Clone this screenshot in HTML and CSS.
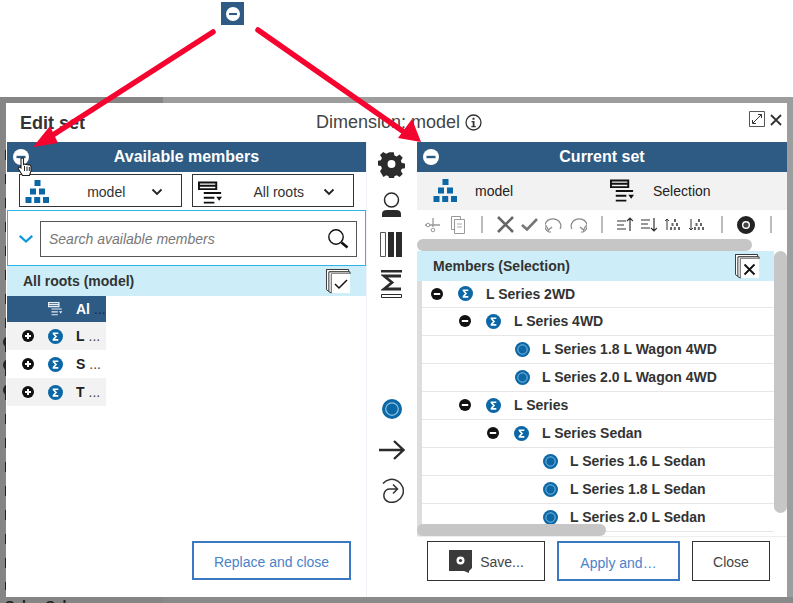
FILE: index.html
```html
<!DOCTYPE html>
<html lang="en">
<head>
    <meta charset="UTF-8">
    <title>Edit set</title>
    <link rel="stylesheet" href="styles.css">
</head>
<body>
    <svg width="0" height="0" class="defs">
        <symbol id="hier" viewBox="0 0 24 24">
            <path fill="#0b67a5" d="M9 0h6v6H9zM4.500 8.500h6v6h-6zM13.500 8.500h6v6h-6zM0 17h6v6H0zM8.700 17h6v6h-6zM17.500 17h6v6h-6z"/>
        </symbol>
        <symbol id="filter" viewBox="0 0 26 24">
            <path fill="none" stroke="#111" stroke-width="2" d="M1 1h18v7H1zM1 4.500h18"/>
            <path fill="#111" d="M6 11h18v2H6zM6 16h11v2H6zM6 21h11v2H6zM19 16h6l-3 4z"/>
        </symbol>
        <symbol id="filter-w" viewBox="0 0 26 24">
            <path fill="none" stroke="#e8eef4" stroke-width="2" d="M1 1h18v7H1zM1 4.500h18"/>
            <path fill="#e8eef4" d="M6 11h18v2H6zM6 16h11v2H6zM6 21h11v2H6zM19 16h6l-3 4z"/>
        </symbol>
        <symbol id="sigma" viewBox="0 0 16 16">
            <circle cx="8" cy="8" r="8" fill="#0b67a5"/>
            <path fill="none" stroke="#fff" stroke-width="1.800" d="M5 4.500h6M5.500 4.500 8.500 8l-3 3.500M5 11.500h6"/>
        </symbol>
        <symbol id="leaf" viewBox="0 0 16 16">
            <circle cx="8" cy="8" r="8" fill="#0b67a5"/>
            <circle cx="8" cy="8" r="5" fill="none" stroke="#8cc3e6" stroke-width="1"/>
        </symbol>
        <symbol id="minus" viewBox="0 0 12 12">
            <circle cx="6" cy="6" r="6" fill="#111"/>
            <path fill="#fff" d="M2.800 5h6.400v2H2.800z"/>
        </symbol>
        <symbol id="plus" viewBox="0 0 12 12">
            <circle cx="6" cy="6" r="6" fill="#111"/>
            <path fill="#fff" d="M3 5h6v2H3zM5 3h2v6H5z"/>
        </symbol>
        <symbol id="minus-w" viewBox="0 0 16 16">
            <circle cx="8" cy="8" r="8" fill="#fff"/>
            <path fill="#2d5b83" d="M3.500 6.800h9v2.400h-9z"/>
        </symbol>
        <symbol id="chev" viewBox="0 0 12 8">
            <path fill="none" stroke="#222" stroke-width="1.800" d="M1.500 1.500 6 6l4.500-4.500"/>
        </symbol>
        <symbol id="stack" viewBox="0 0 26 26">
            <path fill="#fff" stroke="#333" stroke-width="1" d="M.5 .5h20v3h-20z"/>
            <path fill="#fff" stroke="#333" stroke-width="1" d="M.5 .5v21l3 2V3h20V.5z"/>
            <path fill="#fff" stroke="#333" stroke-width="1" d="M3 3h22v2H5.500v20L3 23.500z"/>
            <path fill="#fff" d="M6 5h19v20H6z"/>
        </symbol>
    </svg>

    <div class="top">
        <span class="hint-icon"><svg width="14" height="14"><use href="#minus-w"/></svg></span>
    </div>

    <div class="backdrop">
        <div class="dark-side"></div>
        <div class="bottom-side"></div>
        <div class="behind-dashes"></div>
        <span class="behind-dot d1"></span>
        <span class="behind-dot d2"></span>
        <span class="behind-dot d3"></span>
        <span class="behind-text">Sales Sal</span>
        <div class="dialog">
            <div class="dialog-head">
                <span class="dialog-title">Edit set</span>
                <span class="dialog-dim">Dimension: model
                    <svg class="info" width="17" height="17" viewBox="0 0 17 17">
                        <circle cx="8.500" cy="8.500" r="7.500" fill="none" stroke="#333" stroke-width="1.300"/>
                        <path fill="#333" d="M7.500 3.800h2v2h-2zM6.500 7h3v5h1.300v1.200H6.300V12h1.400V8.200H6.500z"/>
                    </svg>
                </span>
                <svg class="expand" width="16" height="16" viewBox="0 0 16 16">
                    <path fill="#fff" stroke="#555" d="M.5 .5h15v15H.5z"/>
                    <path fill="none" stroke="#333" d="M4 12l8-8M9 3.500h3.500V7M3.500 9v3.500H7"/>
                </svg>
                <svg class="close-x" width="12" height="12" viewBox="0 0 12 12">
                    <path stroke="#333" stroke-width="1.800" d="M1 1l10 10M11 1 1 11"/>
                </svg>
            </div>

            <div class="dialog-body">
                <div class="panel left">
                    <div class="panel-head">
                        <svg class="head-icon" width="16" height="16"><use href="#minus-w"/></svg>
                        Available members
                    </div>
                    <div class="select-row">
                        <div class="select">
                            <svg class="sel-icon" width="25" height="24"><use href="#hier"/></svg>
                            <span class="sel-label">model</span>
                            <svg class="sel-chev" width="12" height="8"><use href="#chev"/></svg>
                        </div>
                        <div class="select">
                            <svg class="sel-icon filter-icon" width="25" height="24"><use href="#filter"/></svg>
                            <span class="sel-label">All roots</span>
                            <svg class="sel-chev" width="12" height="8"><use href="#chev"/></svg>
                        </div>
                    </div>
                    <div class="search-row">
                        <svg width="16" height="10" viewBox="0 0 12 8">
                            <path fill="none" stroke="#0d9ad8" stroke-width="1.800" d="M1 1.500 6 6l5-4.500"/>
                        </svg>
                        <div class="search-box">
                            <span class="placeholder">Search available members</span>
                            <svg width="22" height="22" viewBox="0 0 22 22">
                                <circle cx="9" cy="9" r="7.200" fill="none" stroke="#111" stroke-width="1.400"/>
                                <path stroke="#111" stroke-width="2.600" d="M14.500 14.500l6 5"/>
                            </svg>
                        </div>
                    </div>
                    <div class="list-head">
                        <span>All roots (model)</span>
                        <span class="stack-btn">
                            <svg width="25" height="25"><use href="#stack"/></svg>
                            <svg class="stack-mark" width="14" height="12" viewBox="0 0 14 12">
                                <path fill="none" stroke="#111" stroke-width="1.500" d="M1 6l4 4 8-8"/>
                            </svg>
                        </span>
                    </div>
                    <div class="avail">
                        <div class="avail-row selected">
                            <span class="ic-a"></span>
                            <svg class="ic-b" width="15" height="14"><use href="#filter-w"/></svg>
                            <span class="avail-text">Al</span><span class="dots">...</span>
                        </div>
                        <div class="avail-row">
                            <svg class="ic-a" width="12" height="12"><use href="#plus"/></svg>
                            <svg class="ic-b" width="15" height="15"><use href="#sigma"/></svg>
                            <span class="avail-text">L</span><span class="dots">...</span>
                        </div>
                        <div class="avail-row">
                            <svg class="ic-a" width="12" height="12"><use href="#plus"/></svg>
                            <svg class="ic-b" width="15" height="15"><use href="#sigma"/></svg>
                            <span class="avail-text">S</span><span class="dots">...</span>
                        </div>
                        <div class="avail-row">
                            <svg class="ic-a" width="12" height="12"><use href="#plus"/></svg>
                            <svg class="ic-b" width="15" height="15"><use href="#sigma"/></svg>
                            <span class="avail-text">T</span><span class="dots">...</span>
                        </div>
                    </div>
                    <div class="left-foot">
                        <button class="btn primary replace">Replace and close</button>
                    </div>
                </div>

                <div class="tools">
                    <svg width="27" height="27" viewBox="0 0 24 24">
                        <path fill="#2b2b2b" fill-rule="evenodd" d="M10 1h4l.6 3 2 .9 2.600-1.700 2.800 2.800-1.700 2.600.9 2 3 .6v4l-3 .6-.9 2 1.700 2.600-2.800 2.800-2.600-1.700-2 .9-.6 3h-4l-.6-3-2-.9-2.600 1.700L1.800 18l1.700-2.600-.9-2-3-.6V8.800l3-.6.9-2L1.800 3.600 4.600.8l2.600 1.700 2-.9zM12 8a3.500 3.500 0 1 0 0 7 3.500 3.500 0 0 0 0-7z"/>
                    </svg>
                    <svg class="t-user" width="21" height="26" viewBox="0 0 21 26">
                        <circle cx="10.500" cy="8" r="7" fill="none" stroke="#2b2b2b" stroke-width="1.500"/>
                        <path fill="#2b2b2b" d="M1 25v-3q0-4 5-4h9q5 0 5 4v3z"/>
                    </svg>
                    <svg class="t-cols" width="23" height="25" viewBox="0 0 23 25">
                        <path fill="#fff" stroke="#555" d="M.5 .5h5v24h-5z"/>
                        <path fill="#2b2b2b" d="M8 0h6v25H8zM16 0h6v25h-6z"/>
                    </svg>
                    <svg class="t-sum" width="21" height="28" viewBox="0 0 21 28">
                        <path fill="#2b2b2b" d="M0 0h21v2.500H0z"/>
                        <path fill="none" stroke="#2b2b2b" stroke-width="2.800" d="M20 6H3l8 6.500L3 19h17"/>
                        <path fill="none" stroke="#2b2b2b" d="M.5 24.500h20v3H.5z"/>
                    </svg>
                    <svg class="t-leaf" width="20" height="20"><use href="#leaf"/></svg>
                    <svg class="t-arrow" width="26" height="22" viewBox="0 0 26 22">
                        <path fill="none" stroke="#2b2b2b" stroke-width="2.400" d="M0 11h24M15 2l9.500 9L15 20"/>
                    </svg>
                    <svg class="t-loop" width="25" height="25" viewBox="0 0 25 25">
                        <path fill="none" stroke="#333" stroke-width="1.500" d="M4 5.500A11.500 11.500 0 1 1 10 24q-6-2-5-8 1-5 6-5h7M14 6.500l4.500 4.500L14 15.500"/>
                    </svg>
                </div>

                <div class="panel right">
                    <div class="panel-head">
                        <svg class="head-icon" width="16" height="16"><use href="#minus-w"/></svg>
                        Current set
                    </div>
                    <div class="info-row">
                        <svg width="25" height="24"><use href="#hier"/></svg>
                        <span class="info-model">model</span>
                        <svg class="info-filter" width="25" height="24"><use href="#filter"/></svg>
                        <span>Selection</span>
                    </div>
                    <div class="toolbar">
                        <svg width="16" height="16" viewBox="0 0 16 16">
                            <path fill="none" stroke="#999" stroke-width="1.300" d="M8 1v9M0 8h15"/>
                            <circle cx="3" cy="8" r="1.800" fill="#fff" stroke="#999"/>
                            <circle cx="8" cy="13" r="1.800" fill="#fff" stroke="#999"/>
                        </svg>
                        <svg class="tb-copy" width="14" height="18" viewBox="0 0 14 18">
                            <path fill="#fff" stroke="#999" d="M.5 .5h9v13h-9z"/>
                            <path fill="#fff" stroke="#999" d="M3.500 3.500h10v14h-10z"/>
                            <path stroke="#aaa" d="M6 8h5M6 11h5"/>
                        </svg>
                        <i class="sep s1"></i>
                        <svg width="17" height="17" viewBox="0 0 17 17">
                            <path stroke="#666" stroke-width="2.600" d="M1 1l15 15M16 1 1 16"/>
                        </svg>
                        <svg class="tb-gap" width="17" height="13" viewBox="0 0 17 13">
                            <path fill="none" stroke="#777" stroke-width="2.600" d="M1 7l5 4.500L16 1"/>
                        </svg>
                        <svg class="tb-gap" width="18" height="16" viewBox="0 0 18 16">
                            <path fill="none" stroke="#888" stroke-width="1.200" d="M6 15H4A8 7 0 1 1 15 12M1 8.500 3.500 13 7 10"/>
                        </svg>
                        <svg class="tb-gap2" width="18" height="16" viewBox="0 0 18 16">
                            <path fill="none" stroke="#888" stroke-width="1.200" d="M12 15h2A8 7 0 1 0 3 12M17 8.500 14.500 13 11 10"/>
                        </svg>
                        <i class="sep s2"></i>
                        <svg width="16" height="15" viewBox="0 0 16 15">
                            <path fill="none" stroke="#333" stroke-width="1.200" d="M0 4h9M0 8h7M0 12h9M13 14V1M10 4l3-3 3 3"/>
                        </svg>
                        <svg class="tb-gap3" width="16" height="15" viewBox="0 0 16 15">
                            <path fill="none" stroke="#333" stroke-width="1.200" d="M0 3h9M0 7h7M0 11h9M13 1v13M10 11l3 3 3-3"/>
                        </svg>
                        <svg class="tb-gap3" width="16" height="13" viewBox="0 0 16 13">
                            <path fill="none" stroke="#333" d="M2 12V1M0 3l2-2 2 2"/>
                            <path fill="#666" d="M9 1h2v3H9zM6.500 5h2v3h-2zM11 5h2v3h-2zM5 9h2v3H5zM8.800 9h2v3h-2zM13 9h2v3h-2z"/>
                        </svg>
                        <svg class="tb-gap3" width="16" height="13" viewBox="0 0 16 13">
                            <path fill="none" stroke="#333" d="M2 1v11M0 10l2 2 2-2"/>
                            <path fill="#666" d="M9 1h2v3H9zM6.500 5h2v3h-2zM11 5h2v3h-2zM5 9h2v3H5zM8.800 9h2v3h-2zM13 9h2v3h-2z"/>
                        </svg>
                        <i class="sep s3"></i>
                        <svg width="18" height="18" viewBox="0 0 18 18">
                            <circle cx="9" cy="9" r="6.500" fill="#fff" stroke="#222" stroke-width="5"/>
                            <circle cx="9" cy="9" r="2.600" fill="#444"/>
                        </svg>
                        <i class="sep s4"></i>
                    </div>
                    <div class="hscroll"><span class="thumb top-thumb"></span></div>
                    <div class="members-wrap">
                        <div class="members">
                            <div class="list-head members-head">
                                <span>Members (Selection)</span>
                                <span class="stack-btn">
                                    <svg width="25" height="25"><use href="#stack"/></svg>
                                    <svg class="stack-mark" width="13" height="13" viewBox="0 0 13 13">
                                        <path stroke="#111" stroke-width="1.800" d="M1.500 1.500l10 10M11.500 1.500l-10 10"/>
                                    </svg>
                                </span>
                            </div>
                            <div class="tree">
                                <div class="tree-row lv0">
                                    <svg class="toggle" width="12" height="12"><use href="#minus"/></svg>
                                    <svg class="node" width="15" height="15"><use href="#sigma"/></svg>
                                    <span>L Series 2WD</span>
                                </div>
                                <div class="tree-row lv1">
                                    <svg class="toggle" width="12" height="12"><use href="#minus"/></svg>
                                    <svg class="node" width="15" height="15"><use href="#sigma"/></svg>
                                    <span>L Series 4WD</span>
                                </div>
                                <div class="tree-row lv2">
                                    <svg class="node tip" width="15" height="15"><use href="#leaf"/></svg>
                                    <span>L Series 1.8 L Wagon 4WD</span>
                                </div>
                                <div class="tree-row lv2">
                                    <svg class="node tip" width="15" height="15"><use href="#leaf"/></svg>
                                    <span>L Series 2.0 L Wagon 4WD</span>
                                </div>
                                <div class="tree-row lv1">
                                    <svg class="toggle" width="12" height="12"><use href="#minus"/></svg>
                                    <svg class="node" width="15" height="15"><use href="#sigma"/></svg>
                                    <span>L Series</span>
                                </div>
                                <div class="tree-row lv2b">
                                    <svg class="toggle" width="12" height="12"><use href="#minus"/></svg>
                                    <svg class="node" width="15" height="15"><use href="#sigma"/></svg>
                                    <span>L Series Sedan</span>
                                </div>
                                <div class="tree-row lv3">
                                    <svg class="node tip" width="15" height="15"><use href="#leaf"/></svg>
                                    <span>L Series 1.6 L Sedan</span>
                                </div>
                                <div class="tree-row lv3">
                                    <svg class="node tip" width="15" height="15"><use href="#leaf"/></svg>
                                    <span>L Series 1.8 L Sedan</span>
                                </div>
                                <div class="tree-row lv3">
                                    <svg class="node tip" width="15" height="15"><use href="#leaf"/></svg>
                                    <span>L Series 2.0 L Sedan</span>
                                </div>
                            </div>
                            <span class="thumb bottom-thumb"></span>
                        </div>
                        <span class="thumb side-thumb"></span>
                    </div>
                    <div class="right-foot">
                        <button class="btn save">
                            <svg width="25" height="25" viewBox="0 0 25 25">
                                <path fill="#3a3a3a" d="M1 1h23v18l-3 3v2l-5-2H1z"/>
                                <circle cx="12.500" cy="11.500" r="4" fill="#fff"/>
                                <circle cx="12.500" cy="11.500" r="1.600" fill="#3a3a3a"/>
                            </svg>
                            <span>Save...</span>
                        </button>
                        <button class="btn primary apply">Apply and…</button>
                        <button class="btn close">Close</button>
                    </div>
                </div>
            </div>
        </div>
    </div>

    <svg class="arrows" width="793" height="603" viewBox="0 0 793 603">
        <path fill="none" stroke="#f5042f" stroke-width="5.500" stroke-linecap="round" d="M213 32 42 142"/>
        <path fill="#f5042f" d="M33 147 50 126 58 143z"/>
        <path fill="none" stroke="#f5042f" stroke-width="5.500" stroke-linecap="round" d="M258 30 404 132"/>
        <path fill="#f5042f" d="M421 142 398 138 412 119z"/>
    </svg>

    <svg class="cursor" width="16" height="20" viewBox="0 0 16 20">
        <path fill="#fff" stroke="#222" stroke-width="1.100" d="M4 1.500q1.500-1 2.500 0v6l1-.5 1 .5 1.500-.2 1.200.6 1.300-.1q1.500.5 1.500 2V14l-1.500 4.500H5.500L1.500 12q-.5-1.500 1-2L4 11z"/>
        <path stroke="#222" d="M7.500 9v5M10 9.500V14M12.300 10v4"/>
    </svg>
</body>
</html>
```

FILE: styles.css
```css
* {
    box-sizing: border-box;
}

html, body {
    margin: 0;
    height: 603px;
    overflow: hidden;
}

body {
    position: relative;
    background-color: white;
    font-family: "Liberation Sans", Arial, sans-serif;
    color: #222;
}

.defs {
    position: absolute;
}

svg {
    flex: none;
    display: block;
}

.top {
    height: 97px;
    padding: 2px 0 0 221px;
    display: flex;
}

.hint-icon {
    width: 23px;
    height: 23px;
    background-color: #2d5b83;
    display: flex;
    align-items: center;
    justify-content: center;
}

.backdrop {
    position: relative;
    height: 506px;
    background-color: #9d9d9d;
    padding: 6px;
    overflow: hidden;
}

/* page behind the dialog */
.dark-side {
    position: absolute;
    left: 0;
    top: 0;
    width: 163px;
    height: 100%;
    background-color: #858585;
}

.bottom-side {
    position: absolute;
    left: 163px;
    right: 0;
    bottom: 0;
    height: 6px;
    background-color: #8a8a8a;
}

.behind-dashes {
    position: absolute;
    left: 5px;
    top: 53px;
    width: 2px;
    height: 440px;
    background: repeating-linear-gradient(to bottom, #222 0, #222 10px, transparent 10px, transparent 24px);
}

.behind-dot {
    position: absolute;
    left: 3px;
    width: 12px;
    height: 12px;
    border-radius: 50%;
    background-color: #222;
}

.d1 {
    top: 239px;
}

.d2 {
    top: 262px;
}

.d3 {
    top: 287px;
}

.behind-text {
    position: absolute;
    left: 5px;
    top: 501px;
    font-size: 14px;
    font-weight: bold;
    color: #222;
}

.dialog {
    position: relative;
    height: 494px;
    background-color: white;
    display: flex;
    flex-direction: column;
}

.dialog-head {
    height: 39px;
    flex: none;
    display: flex;
    align-items: center;
    padding: 1px 11px 0 14px;
    position: relative;
}

.dialog-title {
    font-size: 18px;
    font-weight: bold;
    color: #333;
}

.dialog-dim {
    position: absolute;
    left: 310px;
    top: 9px;
    font-size: 18px;
    color: #444;
    display: flex;
    align-items: center;
    gap: 5px;
    white-space: nowrap;
}

.expand {
    position: absolute;
    left: 743px;
    top: 8px;
}

.close-x {
    position: absolute;
    left: 764px;
    top: 11px;
}

.dialog-body {
    flex: 1;
    display: flex;
    min-height: 0;
}

.panel {
    display: flex;
    flex-direction: column;
}

.left {
    width: 361px;
    padding-left: 1px;
    border-right: 1px solid #eef2f8;
}

.right {
    width: 370px;
}

.panel-head {
    position: relative;
    height: 30px;
    flex: none;
    background-color: #2d5b83;
    color: white;
    font-size: 16px;
    font-weight: bold;
    display: flex;
    align-items: center;
    justify-content: center;
    padding-bottom: 1px;
}

.head-icon {
    position: absolute;
    left: 6px;
    top: 7px;
}

.select-row {
    display: flex;
    gap: 10px;
    padding: 2px 12px 0;
    flex: none;
}

.select {
    width: 163px;
    height: 33px;
    border: 1px solid #333;
    display: flex;
    align-items: center;
    padding: 0 18px 0 5px;
    font-size: 14px;
    color: #333;
}

.sel-icon {
    margin-top: 2px;
}

.filter-icon {
    margin-top: 5px;
}

.sel-label {
    flex: 1;
    text-align: center;
    padding: 3px 0 0 12px;
}

.sel-chev {
    margin-top: 3px;
}

.search-row {
    margin-top: 3px;
    height: 56px;
    flex: none;
    border: 1px solid #2fb4ea;
    display: flex;
    align-items: center;
    padding: 1px 8px 0 10px;
    gap: 6px;
}

.search-box {
    flex: 1;
    height: 36px;
    border: 1px solid #555;
    display: flex;
    align-items: center;
    justify-content: space-between;
    padding: 0 7px 0 8px;
    font-size: 14px;
    font-style: italic;
    color: #777;
}

.list-head {
    height: 30px;
    flex: none;
    background-color: #cdeef8;
    display: flex;
    align-items: center;
    justify-content: space-between;
    font-size: 14px;
    font-weight: bold;
    color: #333;
    padding: 0 15px 0 16px;
}

.stack-btn {
    position: relative;
    width: 25px;
    height: 25px;
    margin-top: 1px;
}

.stack-mark {
    position: absolute;
    left: 8px;
    top: 9px;
}

.avail {
    width: 99px;
    flex: none;
}

.avail-row {
    height: 28px;
    display: flex;
    align-items: center;
    font-size: 14px;
    font-weight: bold;
    color: #222;
    padding-left: 15px;
    background-color: white;
}

.avail-row:nth-child(even) {
    background-color: #f2f2f2;
}

.avail-row.selected {
    height: 26px;
    background-color: #2d5b83;
    color: white;
}

.ic-a {
    width: 12px;
    flex: none;
}

.ic-b {
    margin-left: 14px;
    margin-right: 13px;
}

.dots {
    font-weight: normal;
    margin-left: 4px;
    color: #444;
}

.selected .dots {
    color: #1c2a36;
}

.left-foot {
    flex: 1;
    display: flex;
    justify-content: flex-end;
    align-items: flex-end;
    padding: 0 15px 17px 0;
}

.btn {
    background-color: white;
    border: 1px solid #333;
    font-family: inherit;
    font-size: 14px;
    color: #444;
    padding: 2px 0 0;
    display: flex;
    align-items: center;
    justify-content: center;
}

.btn.primary {
    border: 2px solid #3b78c2;
    color: #4a82c9;
    padding-top: 3px;
}

.replace {
    width: 159px;
    height: 39px;
}

.tools {
    width: 50px;
    flex: none;
    display: flex;
    flex-direction: column;
    align-items: center;
    padding: 9px 1px 0 0;
}

.t-user {
    margin-top: 14px;
}

.t-cols {
    margin-top: 14px;
}

.t-sum {
    margin-top: 13px;
}

.t-leaf {
    margin-top: 101px;
}

.t-arrow {
    margin-top: 20px;
}

.t-loop {
    margin-top: 17px;
}

.info-row {
    height: 38px;
    flex: none;
    background-color: #f2f2f2;
    display: flex;
    align-items: center;
    padding-left: 16px;
    font-size: 14px;
    color: #222;
}

.info-model {
    width: 152px;
    padding-left: 17px;
}

.info-filter {
    margin-right: 18px;
}

.toolbar {
    height: 29px;
    flex: none;
    display: flex;
    align-items: center;
    padding-left: 8px;
}

.tb-copy {
    margin-left: 10px;
}

.tb-gap {
    margin-left: 7px;
}

.tb-gap2 {
    margin-left: 6px;
}

.tb-gap3 {
    margin-left: 8px;
}

.sep {
    width: 2px;
    height: 17px;
    background-color: #bbb;
    flex: none;
}

.s1 {
    margin: 0 14px 0 16px;
}

.s2 {
    margin: 0 14px 0 14px;
}

.s3 {
    margin: 0 14px 0 16px;
}

.s4 {
    margin-left: 15px;
}

.hscroll {
    height: 12px;
    flex: none;
    background-color: white;
}

.thumb {
    display: block;
    background-color: #c6c6c6;
    border-radius: 7px;
}

.top-thumb {
    width: 335px;
    height: 12px;
}

.members-wrap {
    position: relative;
    height: 285px;
    flex: none;
    display: flex;
}

.members {
    position: relative;
    width: 357px;
    height: 285px;
    overflow: hidden;
}

.members-head {
    padding-right: 14px;
}

.tree {
    height: 255px;
    overflow: hidden;
    border-left: 5px solid #ddd;
}

.tree-row {
    height: 28px;
    display: flex;
    align-items: center;
    font-size: 14px;
    font-weight: bold;
    color: #333;
    border-bottom: 1px solid #e6e6e6;
    padding-bottom: 1px;
}

.tree-row:first-child {
    height: 27px;
}

.toggle {
    margin-right: 15px;
}

.node {
    margin-right: 13px;
}

.node.tip {
    margin-right: 12px;
}

.lv0 {
    padding-left: 9px;
}

.lv1 {
    padding-left: 37px;
}

.lv2 {
    padding-left: 93px;
}

.lv2b {
    padding-left: 65px;
}

.lv3 {
    padding-left: 121px;
}

.bottom-thumb {
    position: absolute;
    left: 0;
    bottom: 0;
    width: 189px;
    height: 12px;
}

.side-thumb {
    width: 13px;
    height: 262px;
    flex: none;
}

.right-foot {
    display: flex;
    padding: 4px 0 0 10px;
    gap: 12px;
    border-top: 1px solid #eee;
}

.save {
    width: 118px;
    height: 40px;
    gap: 7px;
}

.save svg {
    margin-top: -2px;
}

.apply {
    width: 123px;
    height: 40px;
}

.close {
    width: 78px;
    height: 40px;
}

.arrows {
    position: absolute;
    left: 0;
    top: 0;
    pointer-events: none;
}

.cursor {
    position: absolute;
    left: 17px;
    top: 157px;
}
```
